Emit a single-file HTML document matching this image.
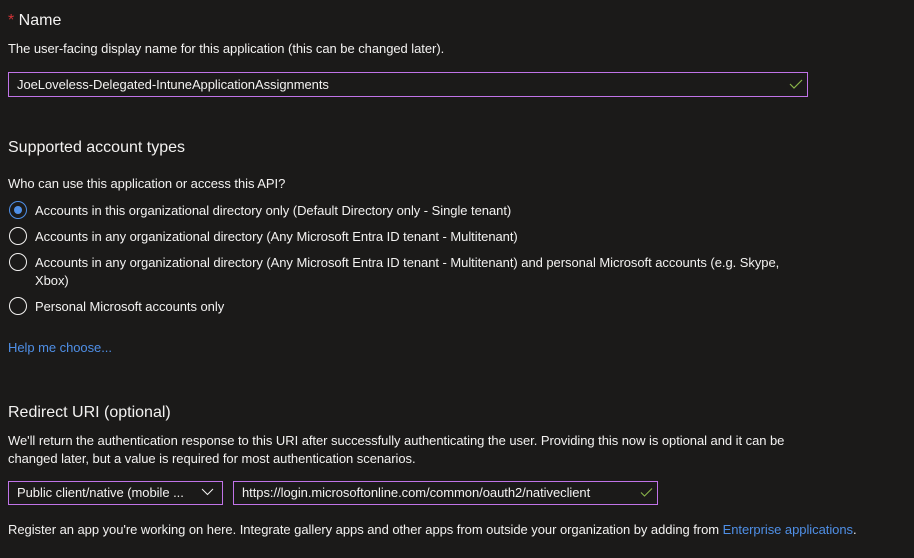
<!DOCTYPE html>
<html><head><meta charset="utf-8"><style>
body{margin:0;width:914px;height:558px;background:#1b1a19;color:#f3f2f1;font-family:"Liberation Sans",sans-serif;font-size:13px;letter-spacing:-0.05px;position:relative;overflow:hidden}
.a{position:absolute;white-space:nowrap;line-height:16px}
.h{font-size:16px;letter-spacing:0}
.box{position:absolute;border:1px solid #c073e8;box-sizing:border-box;background:#1b1a19}
.r{position:absolute;width:18px;height:18px;border:1px solid #f3f2f1;border-radius:50%;box-sizing:border-box;left:9px}
.lnk{color:#4f8fe6}
</style></head><body>
<div class="a h" style="left:8px;top:13px"><span style="color:#d13438">*</span> Name</div>
<div class="a" style="left:8px;top:41px">The user-facing display name for this application (this can be changed later).</div>
<div class="box" style="left:8px;top:72px;width:800px;height:25px"></div>
<div class="a" style="left:17px;top:77px">JoeLoveless-Delegated-IntuneApplicationAssignments</div>
<svg style="position:absolute;left:789px;top:78px" width="14" height="12"><path d="M1 6 L5 10 L13 2" fill="none" stroke="#8ab44a" stroke-width="1.2"/></svg>

<div class="a h" style="left:8px;top:140px">Supported account types</div>
<div class="a" style="left:8px;top:176px">Who can use this application or access this API?</div>
<div class="r" style="top:201px;border-color:#4f8fe6"><div style="position:absolute;left:4px;top:4px;width:8px;height:8px;border-radius:50%;background:#4f8fe6"></div></div>
<div class="a" style="left:35px;top:203px">Accounts in this organizational directory only (Default Directory only - Single tenant)</div>
<div class="r" style="top:227px"></div>
<div class="a" style="left:35px;top:229px">Accounts in any organizational directory (Any Microsoft Entra ID tenant - Multitenant)</div>
<div class="r" style="top:253px"></div>
<div class="a" style="left:35px;top:255px">Accounts in any organizational directory (Any Microsoft Entra ID tenant - Multitenant) and personal Microsoft accounts (e.g. Skype,</div>
<div class="a" style="left:35px;top:273px">Xbox)</div>
<div class="r" style="top:297px"></div>
<div class="a" style="left:35px;top:299px">Personal Microsoft accounts only</div>
<div class="a lnk" style="left:8px;top:340px">Help me choose...</div>

<div class="a h" style="left:8px;top:405px">Redirect URI (optional)</div>
<div class="a" style="left:8px;top:433px">We'll return the authentication response to this URI after successfully authenticating the user. Providing this now is optional and it can be</div>
<div class="a" style="left:8px;top:451px">changed later, but a value is required for most authentication scenarios.</div>
<div class="box" style="left:8px;top:481px;width:215px;height:24px"></div>
<div class="a" style="left:17px;top:485px">Public client/native (mobile ...</div>
<svg style="position:absolute;left:201px;top:488px" width="13" height="8"><path d="M1 1 L6.5 6.5 L12 1" fill="none" stroke="#f3f2f1" stroke-width="1"/></svg>
<div class="box" style="left:233px;top:481px;width:425px;height:24px"></div>
<div class="a" style="left:242px;top:485px">https://login.microsoftonline.com/common/oauth2/nativeclient</div>
<svg style="position:absolute;left:640px;top:487px" width="13" height="11"><path d="M1 5.5 L4.5 9 L12 1.5" fill="none" stroke="#8ab44a" stroke-width="1.1"/></svg>
<div class="a" style="left:8px;top:522px">Register an app you're working on here. Integrate gallery apps and other apps from outside your organization by adding from <span class="lnk">Enterprise applications</span>.</div>
</body></html>
